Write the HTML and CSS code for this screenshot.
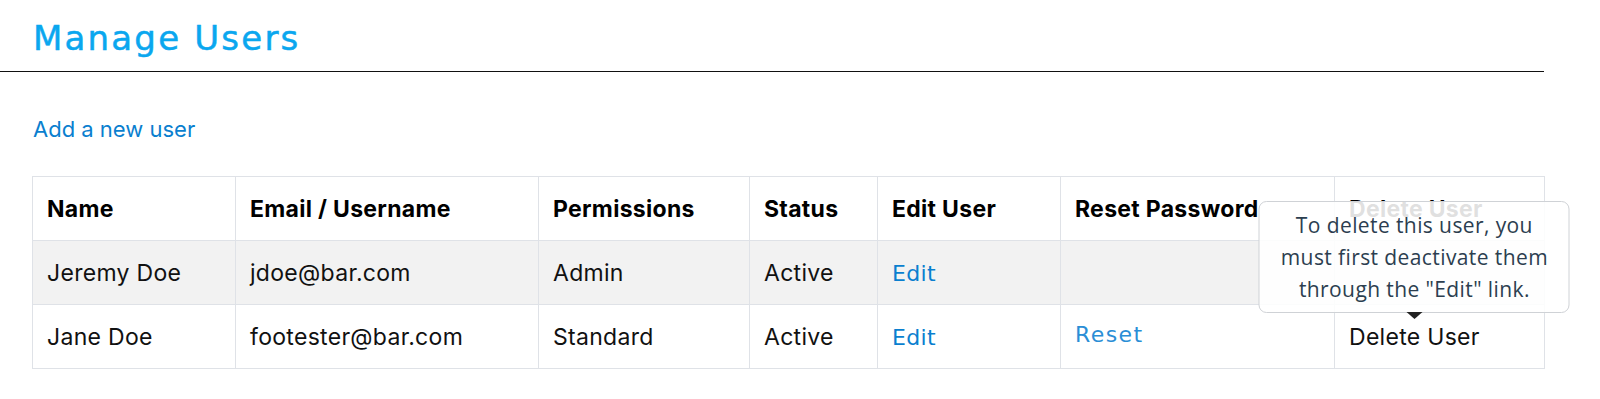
FILE: index.html
```html
<!DOCTYPE html>
<html lang="en">
<head>
<meta charset="utf-8">
<title>Manage Users</title>
<link rel="stylesheet" href="styles.css">
</head>
<body>
<div class="page">
  <header class="page-header">
    <h1 class="title">Manage Users</h1>
  </header>
  <a class="add-link" href="#">Add a new user</a>
  <table class="users">
    <colgroup>
      <col class="c-name"><col class="c-email"><col class="c-perm"><col class="c-status"><col class="c-edit"><col class="c-reset"><col class="c-delete">
    </colgroup>
    <thead>
      <tr>
        <th>Name</th>
        <th>Email / Username</th>
        <th>Permissions</th>
        <th>Status</th>
        <th>Edit User</th>
        <th>Reset Password</th>
        <th>Delete User</th>
      </tr>
    </thead>
    <tbody>
      <tr class="alt">
        <td>Jeremy Doe</td>
        <td>jdoe@bar.com</td>
        <td>Admin</td>
        <td>Active</td>
        <td><a class="action" href="#">Edit</a></td>
        <td></td>
        <td></td>
      </tr>
      <tr>
        <td>Jane Doe</td>
        <td>footester@bar.com</td>
        <td>Standard</td>
        <td>Active</td>
        <td><a class="action" href="#">Edit</a></td>
        <td><a class="action reset" href="#">Reset</a></td>
        <td><span class="delete">Delete User<span class="tooltip">To delete this user, you<br>must first deactivate them<br>through the "Edit" link.</span></span></td>
      </tr>
    </tbody>
  </table>
</div>
</body>
</html>
```

FILE: styles.css
```css
html, body {
  margin: 0;
  padding: 0;
  background: #ffffff;
}

body {
  font-family: "Inter", "Liberation Sans", sans-serif;
  color: #111111;
}

.page {
  width: 1544px;
}

.page-header {
  padding: 15px 0 10px 33px;
  border-bottom: 1.5px solid #111111;
}

.title {
  margin: 0;
  font-family: "DejaVu Sans", sans-serif;
  font-weight: 400;
  font-size: 34px;
  letter-spacing: 2.2px;
  line-height: 46px;
  color: #0aa7ef;
  -webkit-text-stroke: 0.5px #0aa7ef;
}

.add-link {
  display: block;
  margin: 44px 0 0 33px;
  width: max-content;
  font-size: 22px;
  line-height: 26px;
  color: #0a7fcf;
  text-decoration: none;
}

.users {
  margin: 34px 0 0 32px;
  width: 1512px;
  border-collapse: collapse;
  table-layout: fixed;
  font-size: 23px;
  letter-spacing: 0.3px;
}

.c-name { width: 203px; }
.c-email { width: 303px; }
.c-perm { width: 211px; }
.c-status { width: 128px; }
.c-edit { width: 183px; }
.c-reset { width: 274px; }
.c-delete { width: 210px; }

.users th,
.users td {
  height: 63px;
  padding: 0 14px;
  border: 1px solid #dfe2e7;
  text-align: left;
  vertical-align: middle;
  white-space: nowrap;
}

.users th {
  font-weight: 700;
  color: #000000;
}

.users td {
  font-weight: 400;
  color: #111111;
}

.users tr.alt td {
  background: #f2f2f2;
}

.action {
  font-family: "DejaVu Sans", sans-serif;
  font-size: 22px;
  letter-spacing: 0.3px;
  color: #0a7fcf;
  text-decoration: none;
}

.reset {
  position: relative;
  top: -3px;
  letter-spacing: 1.4px;
  color: #2a8ed6;
}

.delete {
  position: relative;
  display: inline-block;
  color: #111111;
}

.tooltip {
  position: absolute;
  left: 50%;
  bottom: calc(100% + 10px);
  transform: translateX(-50%);
  box-sizing: border-box;
  width: 311px;
  padding: 7px 6px;
  border: 1px solid #cfd2d6;
  border-radius: 8px;
  background: rgba(255, 255, 255, 0.88);
  font-family: "Open Sans", "Liberation Sans", sans-serif;
  font-size: 21px;
  letter-spacing: 0.4px;
  line-height: 32px;
  color: #2c3e50;
  text-align: center;
  white-space: nowrap;
}

.tooltip::after {
  content: "";
  position: absolute;
  top: 100%;
  left: 50%;
  margin-left: -8px;
  border-left: 8px solid transparent;
  border-right: 8px solid transparent;
  border-top: 7px solid #222222;
}
```
